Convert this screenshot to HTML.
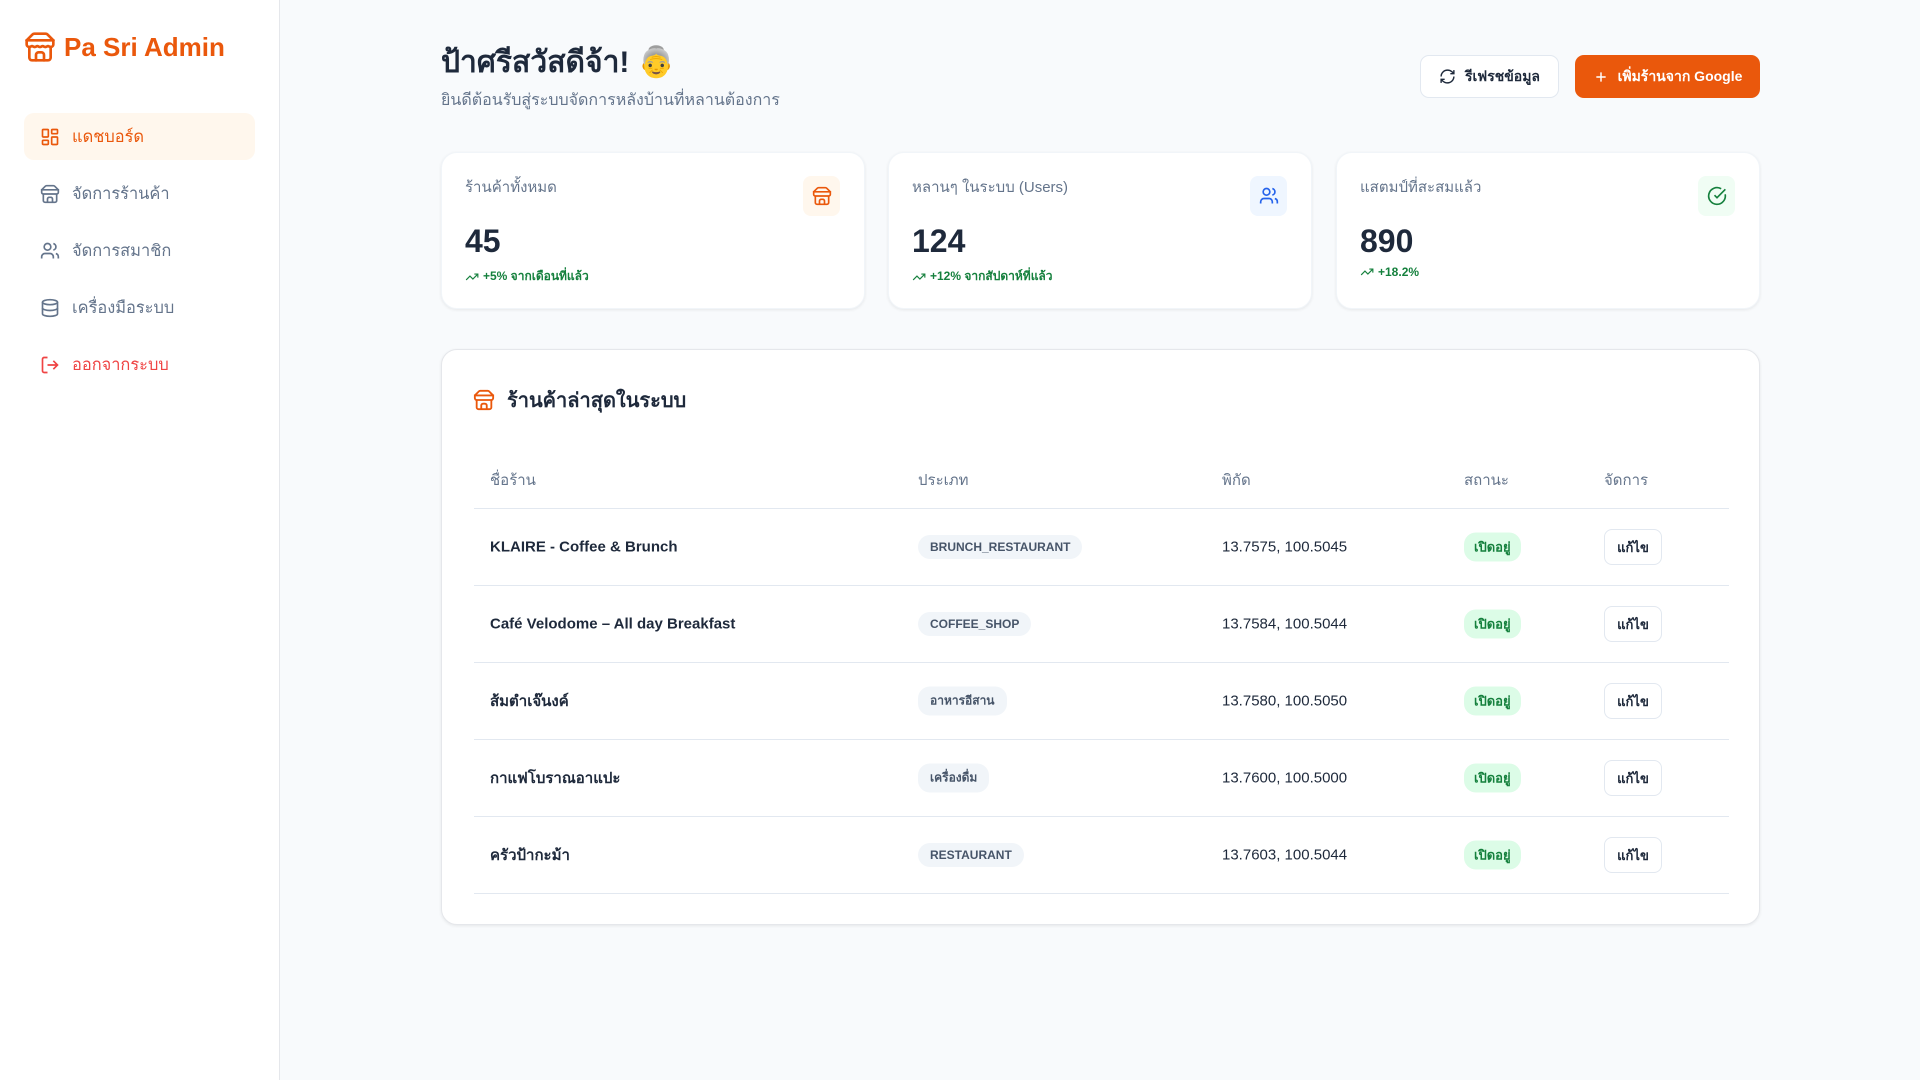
<!DOCTYPE html>
<html><head><meta charset="utf-8"><style>
*{box-sizing:border-box;margin:0;padding:0}
body{width:1920px;height:1080px;background:#f8fafc;font-family:"Liberation Sans","Noto Sans CJK SC",sans-serif;color:#1e293b;position:relative;overflow:hidden}
.side{position:absolute;left:0;top:0;width:280px;height:1080px;background:#fff;border-right:1px solid #e5e7eb}
.logo{position:absolute;left:24px;top:31px;display:flex;align-items:center;gap:8px;color:#ea580c;font-weight:700;font-size:26px}
.nav{position:absolute;left:24px;width:231px;height:47px;border-radius:10px;display:flex;align-items:center;padding-left:16px;gap:12px;font-size:16.4px;color:#64748b}
.nav.act{background:#fff7ed;color:#ea580c}
.nav.out{color:#ef4444}
svg{flex:none}
h1{position:absolute;left:441px;top:39px;font-size:30px;font-weight:700;color:#1e293b}
.sub{position:absolute;left:441px;top:88px;font-size:16px;color:#64748b}
.btn{position:absolute;top:55px;height:43px;border-radius:9px;display:flex;align-items:center;justify-content:center;gap:9px;font-size:14px;font-weight:700}
.card{position:absolute;background:#fff;border-radius:16px;box-shadow:0 1px 3px rgba(0,0,0,.08);border:1px solid #f1f5f9}
.stat{top:152px;height:157px;width:424px}
.stat .lab{position:absolute;left:23px;top:22px;font-size:15px;color:#64748b}
.stat .num{position:absolute;left:23px;top:70px;font-size:32px;font-weight:700;color:#1e293b}
.stat .tr{position:absolute;left:23px;font-size:12px;font-weight:700;color:#15803d;display:flex;align-items:center;gap:4px}
.stat .ic{position:absolute;right:24px;top:23px;width:37px;height:40px;border-radius:8px;display:flex;align-items:center;justify-content:center}
.tbl{left:441px;top:349px;width:1319px;height:576px;border:1px solid #e5e7eb}
.row{position:absolute;left:32px;width:1255px;border-bottom:1px solid #e2e8f0;height:77px}
.row>div{position:absolute;top:50%;transform:translateY(-50%);font-size:15px}
.c1{left:16px}.c2{left:444px}.c3{left:748px}.c4{left:990px}.c5{left:1130px}
.hd>div{color:#64748b;font-size:15px}
.name{font-weight:700;color:#1e293b}
.row>.pill{background:#f1f5f9;color:#475569;font-size:12px;font-weight:700;padding:5px 12px;border-radius:12px}
.row>.ok{background:#dcfce7;color:#15803d;font-size:13px;font-weight:700;padding:4px 10px;border-radius:12px}
.row>.ed{border:1px solid #e2e8f0;border-radius:8px;width:58px;height:36px;display:flex;align-items:center;justify-content:center;font-size:13px;font-weight:700;background:#fff}
</style></head><body>
<div class="side">
 <div class="logo"><svg width="32" height="32" viewBox="0 0 24 24" fill="none" stroke="#ea580c" stroke-width="2" stroke-linecap="round" stroke-linejoin="round"><path d="m2 7 4.4-4.4A2 2 0 0 1 7.8 2h8.4a2 2 0 0 1 1.4.6L22 7"/><path d="M4 12v8a2 2 0 0 0 2 2h12a2 2 0 0 0 2-2v-8"/><path d="M15 22v-4a2 2 0 0 0-2-2h-2a2 2 0 0 0-2 2v4"/><path d="M2 7h20"/><path d="M22 7v3a2 2 0 0 1-2 2a2.7 2.7 0 0 1-1.6-.6.8.8 0 0 0-.8 0A2.7 2.7 0 0 1 16 12a2.7 2.7 0 0 1-1.6-.6.8.8 0 0 0-.8 0A2.7 2.7 0 0 1 12 12a2.7 2.7 0 0 1-1.6-.6.8.8 0 0 0-.8 0A2.7 2.7 0 0 1 8 12a2.7 2.7 0 0 1-1.6-.6.8.8 0 0 0-.8 0A2.7 2.7 0 0 1 4 12a2 2 0 0 1-2-2V7"/></svg>Pa Sri Admin</div>
 <div class="nav act" style="top:113px"><svg width="20" height="20" viewBox="0 0 24 24" fill="none" stroke="currentColor" stroke-width="2"><rect x="3" y="3" width="7" height="9" rx="1"/><rect x="14" y="3" width="7" height="5" rx="1"/><rect x="14" y="12" width="7" height="9" rx="1"/><rect x="3" y="16" width="7" height="5" rx="1"/></svg>แดชบอร์ด</div>
 <div class="nav" style="top:170px"><svg width="20" height="20" viewBox="0 0 24 24" fill="none" stroke="currentColor" stroke-width="2"><path d="m2 7 4.4-4.4A2 2 0 0 1 7.8 2h8.4a2 2 0 0 1 1.4.6L22 7"/><path d="M4 12v8a2 2 0 0 0 2 2h12a2 2 0 0 0 2-2v-8"/><path d="M15 22v-4a2 2 0 0 0-2-2h-2a2 2 0 0 0-2 2v4"/><path d="M2 7h20v3a2 2 0 0 1-2 2H4a2 2 0 0 1-2-2z"/></svg>จัดการร้านค้า</div>
 <div class="nav" style="top:227px"><svg width="20" height="20" viewBox="0 0 24 24" fill="none" stroke="currentColor" stroke-width="2"><path d="M16 21v-2a4 4 0 0 0-4-4H6a4 4 0 0 0-4 4v2"/><circle cx="9" cy="7" r="4"/><path d="M22 21v-2a4 4 0 0 0-3-3.9M16 3.1a4 4 0 0 1 0 7.8"/></svg>จัดการสมาชิก</div>
 <div class="nav" style="top:284px"><svg width="20" height="20" viewBox="0 0 24 24" fill="none" stroke="currentColor" stroke-width="2"><ellipse cx="12" cy="5" rx="9" ry="3"/><path d="M3 5v14a9 3 0 0 0 18 0V5"/><path d="M3 12a9 3 0 0 0 18 0"/></svg>เครื่องมือระบบ</div>
 <div class="nav out" style="top:341px"><svg width="20" height="20" viewBox="0 0 24 24" fill="none" stroke="currentColor" stroke-width="2"><path d="M9 21H5a2 2 0 0 1-2-2V5a2 2 0 0 1 2-2h4"/><path d="m16 17 5-5-5-5M21 12H9"/></svg>ออกจากระบบ</div>
</div>
<h1>ป้าศรีสวัสดีจ้า! 👵</h1>
<div class="sub">ยินดีต้อนรับสู่ระบบจัดการหลังบ้านที่หลานต้องการ</div>
<div class="btn" style="left:1420px;width:139px;background:#fff;border:1px solid #e2e8f0;color:#1e293b"><svg width="17" height="17" viewBox="0 0 24 24" fill="none" stroke="#1e293b" stroke-width="2"><path d="M3 12a9 9 0 0 1 9-9 9.75 9.75 0 0 1 6.7 2.7L21 8"/><path d="M21 3v5h-5"/><path d="M21 12a9 9 0 0 1-9 9 9.75 9.75 0 0 1-6.7-2.7L3 16"/><path d="M8 16H3v5"/></svg>รีเฟรชข้อมูล</div>
<div class="btn" style="left:1575px;width:185px;background:#ea580c;color:#fff"><svg width="16" height="16" viewBox="0 0 24 24" fill="none" stroke="#fff" stroke-width="2.2"><path d="M12 5v14M5 12h14"/></svg>เพิ่มร้านจาก Google</div>

<div class="card stat" style="left:441px"><div class="lab">ร้านค้าทั้งหมด</div><div class="num">45</div><div class="tr" style="top:114px"><svg width="14" height="14" viewBox="0 0 24 24" fill="none" stroke="#15803d" stroke-width="2"><path d="m22 7-8.5 8.5-5-5L2 17"/><path d="M16 7h6v6"/></svg>+5% จากเดือนที่แล้ว</div><div class="ic" style="background:#fff7ed"><svg width="20" height="20" viewBox="0 0 24 24" fill="none" stroke="#ea580c" stroke-width="2"><path d="m2 7 4.4-4.4A2 2 0 0 1 7.8 2h8.4a2 2 0 0 1 1.4.6L22 7"/><path d="M4 12v8a2 2 0 0 0 2 2h12a2 2 0 0 0 2-2v-8"/><path d="M15 22v-4a2 2 0 0 0-2-2h-2a2 2 0 0 0-2 2v4"/><path d="M2 7h20v3a2 2 0 0 1-2 2H4a2 2 0 0 1-2-2z"/></svg></div></div>
<div class="card stat" style="left:888px"><div class="lab">หลานๆ ในระบบ (Users)</div><div class="num">124</div><div class="tr" style="top:114px"><svg width="14" height="14" viewBox="0 0 24 24" fill="none" stroke="#15803d" stroke-width="2"><path d="m22 7-8.5 8.5-5-5L2 17"/><path d="M16 7h6v6"/></svg>+12% จากสัปดาห์ที่แล้ว</div><div class="ic" style="background:#eff6ff"><svg width="20" height="20" viewBox="0 0 24 24" fill="none" stroke="#2563eb" stroke-width="2"><path d="M16 21v-2a4 4 0 0 0-4-4H6a4 4 0 0 0-4 4v2"/><circle cx="9" cy="7" r="4"/><path d="M22 21v-2a4 4 0 0 0-3-3.9M16 3.1a4 4 0 0 1 0 7.8"/></svg></div></div>
<div class="card stat" style="left:1336px"><div class="lab">แสตมป์ที่สะสมแล้ว</div><div class="num">890</div><div class="tr" style="top:112px"><svg width="14" height="14" viewBox="0 0 24 24" fill="none" stroke="#15803d" stroke-width="2"><path d="m22 7-8.5 8.5-5-5L2 17"/><path d="M16 7h6v6"/></svg>+18.2%</div><div class="ic" style="background:#f0fdf4"><svg width="20" height="20" viewBox="0 0 24 24" fill="none" stroke="#15803d" stroke-width="2"><path d="M21.8 10A10 10 0 1 1 17 3.3"/><path d="m9 11 3 3L22 4"/></svg></div></div>

<div class="card tbl">
 <div style="position:absolute;left:31px;top:34px;display:flex;align-items:center;gap:12px;font-size:20px;font-weight:700"><svg width="22" height="22" viewBox="0 0 24 24" fill="none" stroke="#ea580c" stroke-width="2"><path d="m2 7 4.4-4.4A2 2 0 0 1 7.8 2h8.4a2 2 0 0 1 1.4.6L22 7"/><path d="M4 12v8a2 2 0 0 0 2 2h12a2 2 0 0 0 2-2v-8"/><path d="M15 22v-4a2 2 0 0 0-2-2h-2a2 2 0 0 0-2 2v4"/><path d="M2 7h20v3a2 2 0 0 1-2 2H4a2 2 0 0 1-2-2z"/></svg>ร้านค้าล่าสุดในระบบ</div>
 <div class="row hd" style="top:102px;height:57px"><div class="c1">ชื่อร้าน</div><div class="c2">ประเภท</div><div class="c3">พิกัด</div><div class="c4">สถานะ</div><div class="c5">จัดการ</div></div>
 <div class="row" style="top:159px"><div class="c1 name">KLAIRE - Coffee &amp; Brunch</div><div class="c2 pill">BRUNCH_RESTAURANT</div><div class="c3">13.7575, 100.5045</div><div class="c4 ok">เปิดอยู่</div><div class="c5 ed">แก้ไข</div></div>
 <div class="row" style="top:236px"><div class="c1 name">Café Velodome – All day Breakfast</div><div class="c2 pill">COFFEE_SHOP</div><div class="c3">13.7584, 100.5044</div><div class="c4 ok">เปิดอยู่</div><div class="c5 ed">แก้ไข</div></div>
 <div class="row" style="top:313px"><div class="c1 name">ส้มตำเจ๊นงค์</div><div class="c2 pill">อาหารอีสาน</div><div class="c3">13.7580, 100.5050</div><div class="c4 ok">เปิดอยู่</div><div class="c5 ed">แก้ไข</div></div>
 <div class="row" style="top:390px"><div class="c1 name">กาแฟโบราณอาแปะ</div><div class="c2 pill">เครื่องดื่ม</div><div class="c3">13.7600, 100.5000</div><div class="c4 ok">เปิดอยู่</div><div class="c5 ed">แก้ไข</div></div>
 <div class="row" style="top:467px"><div class="c1 name">ครัวป้ากะม้า</div><div class="c2 pill">RESTAURANT</div><div class="c3">13.7603, 100.5044</div><div class="c4 ok">เปิดอยู่</div><div class="c5 ed">แก้ไข</div></div>
</div>
</body></html>
